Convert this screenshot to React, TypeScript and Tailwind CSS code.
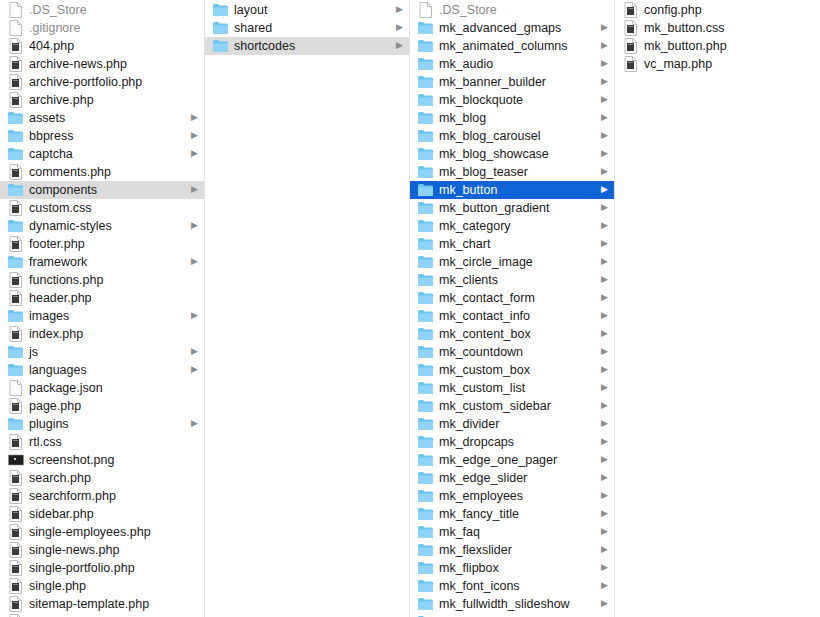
type Kind = "folder" | "code" | "blank" | "hidden" | "image";
type Item = { name: string; kind: Kind; sel?: "grey" | "blue" };

const f = (name: string, sel?: "grey" | "blue"): Item => ({ name, kind: "folder", sel });
const c = (name: string): Item => ({ name, kind: "code" });

const col1: Item[] = [
  { name: ".DS_Store", kind: "hidden" },
  { name: ".gitignore", kind: "hidden" },
  c("404.php"), c("archive-news.php"), c("archive-portfolio.php"), c("archive.php"),
  f("assets"), f("bbpress"), f("captcha"), c("comments.php"), f("components", "grey"),
  c("custom.css"), f("dynamic-styles"), c("footer.php"), f("framework"), c("functions.php"),
  c("header.php"), f("images"), c("index.php"), f("js"), f("languages"),
  { name: "package.json", kind: "blank" }, c("page.php"), f("plugins"), c("rtl.css"),
  { name: "screenshot.png", kind: "image" }, c("search.php"), c("searchform.php"),
  c("sidebar.php"), c("single-employees.php"), c("single-news.php"),
  c("single-portfolio.php"), c("single.php"), c("sitemap-template.php"), c("style.css"),
];

const col2: Item[] = [f("layout"), f("shared"), f("shortcodes", "grey")];

const col3: Item[] = [
  { name: ".DS_Store", kind: "hidden" },
  ...[
    "mk_advanced_gmaps", "mk_animated_columns", "mk_audio", "mk_banner_builder", "mk_blockquote",
    "mk_blog", "mk_blog_carousel", "mk_blog_showcase", "mk_blog_teaser",
  ].map((n) => f(n)),
  f("mk_button", "blue"),
  ...[
    "mk_button_gradient", "mk_category", "mk_chart", "mk_circle_image", "mk_clients",
    "mk_contact_form", "mk_contact_info", "mk_content_box", "mk_countdown", "mk_custom_box",
    "mk_custom_list", "mk_custom_sidebar", "mk_divider", "mk_dropcaps", "mk_edge_one_pager",
    "mk_edge_slider", "mk_employees", "mk_fancy_title", "mk_faq", "mk_flexslider", "mk_flipbox",
    "mk_font_icons", "mk_fullwidth_slideshow", "mk_gallery",
  ].map((n) => f(n)),
];

const col4: Item[] = [c("config.php"), c("mk_button.css"), c("mk_button.php"), c("vc_map.php")];

function Icon({ kind }: { kind: Kind }) {
  if (kind === "folder")
    return (
      <svg width="17" height="14" viewBox="0 0 17 14">
        <path d="M1 2.5 Q1 1 2.5 1 H6 L7.5 2.5 H14.5 Q16 2.5 16 4 V12 Q16 13 15 13 H2 Q1 13 1 12 Z" fill="#6cc4f4" />
        <path d="M1 4.5 H16 V12 Q16 13 15 13 H2 Q1 13 1 12 Z" fill="#8fd3fa" />
      </svg>
    );
  if (kind === "image")
    return (
      <svg width="16" height="14" viewBox="0 0 16 14">
        <rect x="0.5" y="2" width="15" height="10" fill="#1d1d1d" stroke="#888" strokeWidth="0.6" />
        <rect x="6" y="5" width="2" height="2" fill="#ccc" />
      </svg>
    );
  const blank = kind === "blank" || kind === "hidden";
  return (
    <svg width="13" height="16" viewBox="0 0 13 16">
      <path d="M1 0.5 H8.5 L12.5 4.5 V15.5 H1 Z" fill="#fff" stroke="#bdbdbd" />
      <path d="M8.5 0.5 V4.5 H12.5" fill="none" stroke="#bdbdbd" />
      {!blank && <rect x="3" y="5" width="7" height="8" fill="#3a3a3a" />}
      {!blank && <rect x="4" y="6" width="5" height="1" fill="#888" />}
    </svg>
  );
}

function Column({ items, last }: { items: Item[]; last?: boolean }) {
  return (
    <div className={`flex flex-col pt-px overflow-hidden ${last ? "w-[204px]" : "w-[205px] border-r border-[#e3e3e3]"}`}>
      {items.map((it) => {
        const blue = it.sel === "blue";
        return (
          <div
            key={it.name}
            className={`flex items-center h-[18px] shrink-0 pl-[7px] pr-[6px] ${blue ? "bg-[#0f63d5] text-white" : it.sel === "grey" ? "bg-[#dcdcdc]" : ""}`}
          >
            <div className="w-[17px] flex justify-center shrink-0">
              <Icon kind={it.kind} />
            </div>
            <span className={`ml-[5px] flex-1 text-[12.5px] leading-none ${it.kind === "hidden" ? "text-[#8a8a8a]" : blue ? "text-white" : "text-[#1a1a1a]"}`}>
              {it.name}
            </span>
            {it.kind === "folder" && (
              <span className={`text-[9px] ${blue ? "text-white" : "text-[#8c8c8c]"}`}>▶</span>
            )}
          </div>
        );
      })}
    </div>
  );
}

export default function App() {
  return (
    <div className="flex h-[617px] w-[820px] overflow-hidden bg-white" style={{ fontFamily: '"Liberation Sans", Arial, sans-serif' }}>
      <Column items={col1} />
      <Column items={col2} />
      <Column items={col3} />
      <Column items={col4} last />
    </div>
  );
}
